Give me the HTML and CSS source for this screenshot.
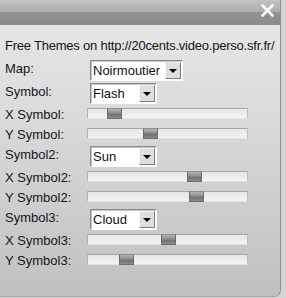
FILE: index.html
```html
<!DOCTYPE html>
<html>
<head>
<meta charset="utf-8">
<link rel="stylesheet" href="styles.css">
</head>
<body>
<div class="panel">
  <div class="header">
    <svg class="close" width="13" height="13" viewBox="0 0 13 13"><path d="M1.5 1.5 L11.5 11.5 M11.5 1.5 L1.5 11.5" stroke="#fff" stroke-width="2.6" stroke-linecap="round"/></svg>
  </div>
  <div class="content">
    <div class="title">Free Themes on http://20cents.video.perso.sfr.fr/</div>
    <div class="form">
      <div class="row srow"><div class="label">Map:</div><div class="select wide"><span class="val">Noirmoutier</span><span class="btn"><i></i></span></div></div>
      <div class="row srow"><div class="label">Symbol:</div><div class="select"><span class="val">Flash</span><span class="btn"><i></i></span></div></div>
      <div class="row trow"><div class="label">X Symbol:</div><div class="track"><div class="thumb" style="margin-left:19px"></div></div></div>
      <div class="row trow"><div class="label">Y Symbol:</div><div class="track"><div class="thumb" style="margin-left:55px"></div></div></div>
      <div class="row srow"><div class="label">Symbol2:</div><div class="select"><span class="val">Sun</span><span class="btn"><i></i></span></div></div>
      <div class="row trow"><div class="label">X Symbol2:</div><div class="track"><div class="thumb" style="margin-left:99px"></div></div></div>
      <div class="row trow"><div class="label">Y Symbol2:</div><div class="track"><div class="thumb" style="margin-left:101px"></div></div></div>
      <div class="row srow"><div class="label">Symbol3:</div><div class="select"><span class="val">Cloud</span><span class="btn"><i></i></span></div></div>
      <div class="row trow"><div class="label">X Symbol3:</div><div class="track"><div class="thumb" style="margin-left:73px"></div></div></div>
      <div class="row trow"><div class="label">Y Symbol3:</div><div class="track"><div class="thumb" style="margin-left:31px"></div></div></div>
    </div>
  </div>
</div>
</body>
</html>
```

FILE: styles.css
```css
html, body {
  margin: 0;
  padding: 0;
}
body {
  background: #d4d4d4;
  font-family: "Liberation Sans", Arial, sans-serif;
  font-size: 13px;
  color: #151515;
  width: 286px;
  height: 298px;
  overflow: hidden;
}
.panel {
  box-sizing: border-box;
  width: 281px;
  height: 297px;
  border-right: 1px solid #8e8e8e;
  border-bottom: 1px solid #a4a4a4;
  border-bottom-right-radius: 7px;
  background: linear-gradient(#e9e9e9 0, #dadada 40%, #c0c0c0 100%);
  overflow: hidden;
}
.header {
  height: 25px;
  display: flex;
  justify-content: flex-end;
  background: linear-gradient(#c4c4c4 0, #aaaaaa 12px, #929292 12px, #8b8b8b 24px, #9a9a9a 25px);
}
.close {
  margin-top: 4px;
  margin-right: 6px;
}
.content {
  padding: 13px 0 0 5px;
}
.title {
  line-height: 15px;
  white-space: nowrap;
  letter-spacing: -0.22px;
}
.form {
  margin-top: 7px;
  display: flex;
  flex-direction: column;
}
.row {
  display: flex;
  align-items: flex-start;
}
.srow {
  height: 23px;
}
.trow {
  height: 20px;
}
.label {
  width: 85px;
  line-height: 15px;
  padding-top: 1px;
  white-space: nowrap;
}
.select {
  box-sizing: border-box;
  width: 67px;
  height: 21px;
  display: flex;
  align-items: center;
  background: #fff;
  border: 1px solid;
  border-color: #8a8a8a #ffffff #ffffff #8a8a8a;
  box-shadow: inset 1px 1px 0 #c4c4c4;
}
.select.wide {
  width: 93px;
}
.val {
  flex: 1;
  padding-left: 2px;
  line-height: 15px;
  color: #111;
}
.btn {
  box-sizing: border-box;
  width: 16px;
  height: 17px;
  margin-right: 1px;
  background: #dedede;
  border: 1px solid;
  border-color: #f4f4f4 #7c7c7c #7c7c7c #f4f4f4;
  display: flex;
  align-items: center;
  justify-content: center;
}
.btn i {
  width: 0;
  height: 0;
  border-left: 4px solid transparent;
  border-right: 4px solid transparent;
  border-top: 4px solid #000;
}
.track {
  box-sizing: border-box;
  width: 161px;
  height: 11px;
  margin-top: 2px;
  margin-left: -3px;
  border: 1px solid;
  border-color: #a6a6a6 #bcbcbc #e2e2e2 #b4b4b4;
  background: linear-gradient(#e6e6e6, #f3f3f3);
  display: flex;
}
.thumb {
  box-sizing: border-box;
  width: 15px;
  height: 11px;
  margin-top: -1px;
  border: 1px solid #6c6c6c;
  border-top-color: #8e8e8e;
  background: linear-gradient(#b4b4b4 0, #8c8c8c 45%, #727272 60%, #8a8a8a 100%);
}
```
